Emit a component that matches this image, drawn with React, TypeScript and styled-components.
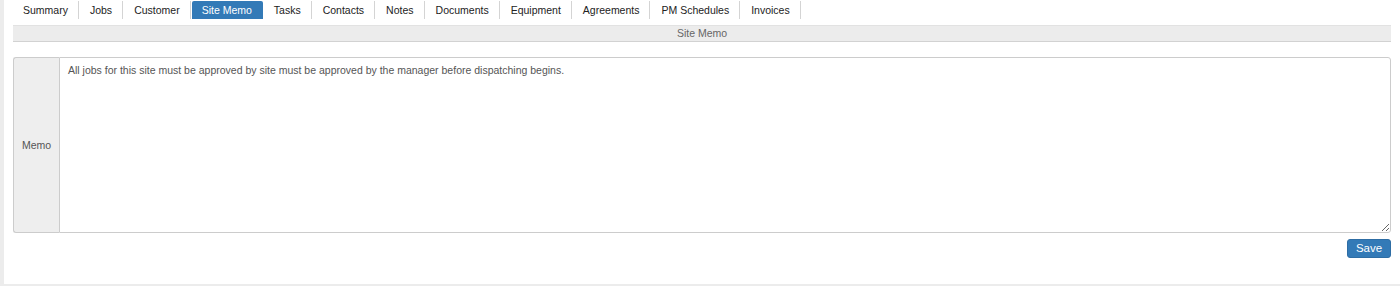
import React from "react";
import styled, { createGlobalStyle } from "styled-components";

const Global = createGlobalStyle`
  html, body { margin: 0; padding: 0; background: #ececec; }
  body { font-family: "Liberation Sans", Arial, sans-serif; }
`;

const Panel = styled.div`
  margin-left: 4px;
  height: 284px;
  background: #fff;
  padding: 0 9px 0 9px;
  box-sizing: border-box;
`;

const TabBar = styled.ul`
  display: flex;
  list-style: none;
  margin: 0;
  padding: 1px 0 0 0;
  height: 25px;
  box-sizing: border-box;
`;

const Tab = styled.li<{ $active?: boolean }>`
  font-size: 10.5px;
  line-height: 18px;
  height: 18px;
  padding: 0 10px;
  color: ${(p) => (p.$active ? "#fff" : "#222")};
  background: ${(p) => (p.$active ? "#337ab7" : "transparent")};
  border-right: 1px solid ${(p) => (p.$active ? "transparent" : "#d4d4d4")};
  border-radius: ${(p) => (p.$active ? "2px 2px 0 0" : "0")};
  white-space: nowrap;
  cursor: pointer;
  & + & { margin-left: 1px; }
`;

const SectionHeader = styled.div`
  height: 15px;
  background: #ececec;
  border-top: 1px solid #e2e2e2;
  border-bottom: 1px solid #d2d2d2;
  font-size: 10.5px;
  line-height: 15px;
  color: #666;
  text-align: center;
`;

const InputGroup = styled.div`
  display: flex;
  margin-top: 15px;
  height: 176px;
`;

const Addon = styled.div`
  width: 45px;
  flex: none;
  background: #eee;
  border: 1px solid #ccc;
  border-right: none;
  border-radius: 3px 0 0 3px;
  display: flex;
  align-items: center;
  justify-content: center;
  font-size: 10.5px;
  color: #555;
`;

const MemoArea = styled.textarea`
  flex: 1;
  border: 1px solid #ccc;
  border-radius: 0 3px 3px 0;
  padding: 5px 8px;
  font-family: "Liberation Sans", Arial, sans-serif;
  font-size: 10.5px;
  line-height: 15px;
  color: #555;
  resize: vertical;
  outline: none;
  box-sizing: border-box;
`;

const Footer = styled.div`
  display: flex;
  justify-content: flex-end;
  margin-top: 6px;
`;

const SaveButton = styled.button`
  background: #337ab7;
  border: 1px solid #2e6da4;
  border-radius: 3px;
  color: #fff;
  font-family: "Liberation Sans", Arial, sans-serif;
  font-size: 11.5px;
  height: 19px;
  width: 44px;
  padding: 0;
  line-height: 17px;
  cursor: pointer;
`;

const tabs = [
  "Summary",
  "Jobs",
  "Customer",
  "Site Memo",
  "Tasks",
  "Contacts",
  "Notes",
  "Documents",
  "Equipment",
  "Agreements",
  "PM Schedules",
  "Invoices",
];

export default function App() {
  return (
    <>
      <Global />
      <Panel>
        <TabBar>
          {tabs.map((t) => (
            <Tab key={t} $active={t === "Site Memo"}>
              {t}
            </Tab>
          ))}
        </TabBar>
        <SectionHeader>Site Memo</SectionHeader>
        <InputGroup>
          <Addon>Memo</Addon>
          <MemoArea defaultValue="All jobs for this site must be approved by site must be approved by the manager before dispatching begins." />
        </InputGroup>
        <Footer>
          <SaveButton>Save</SaveButton>
        </Footer>
      </Panel>
    </>
  );
}
